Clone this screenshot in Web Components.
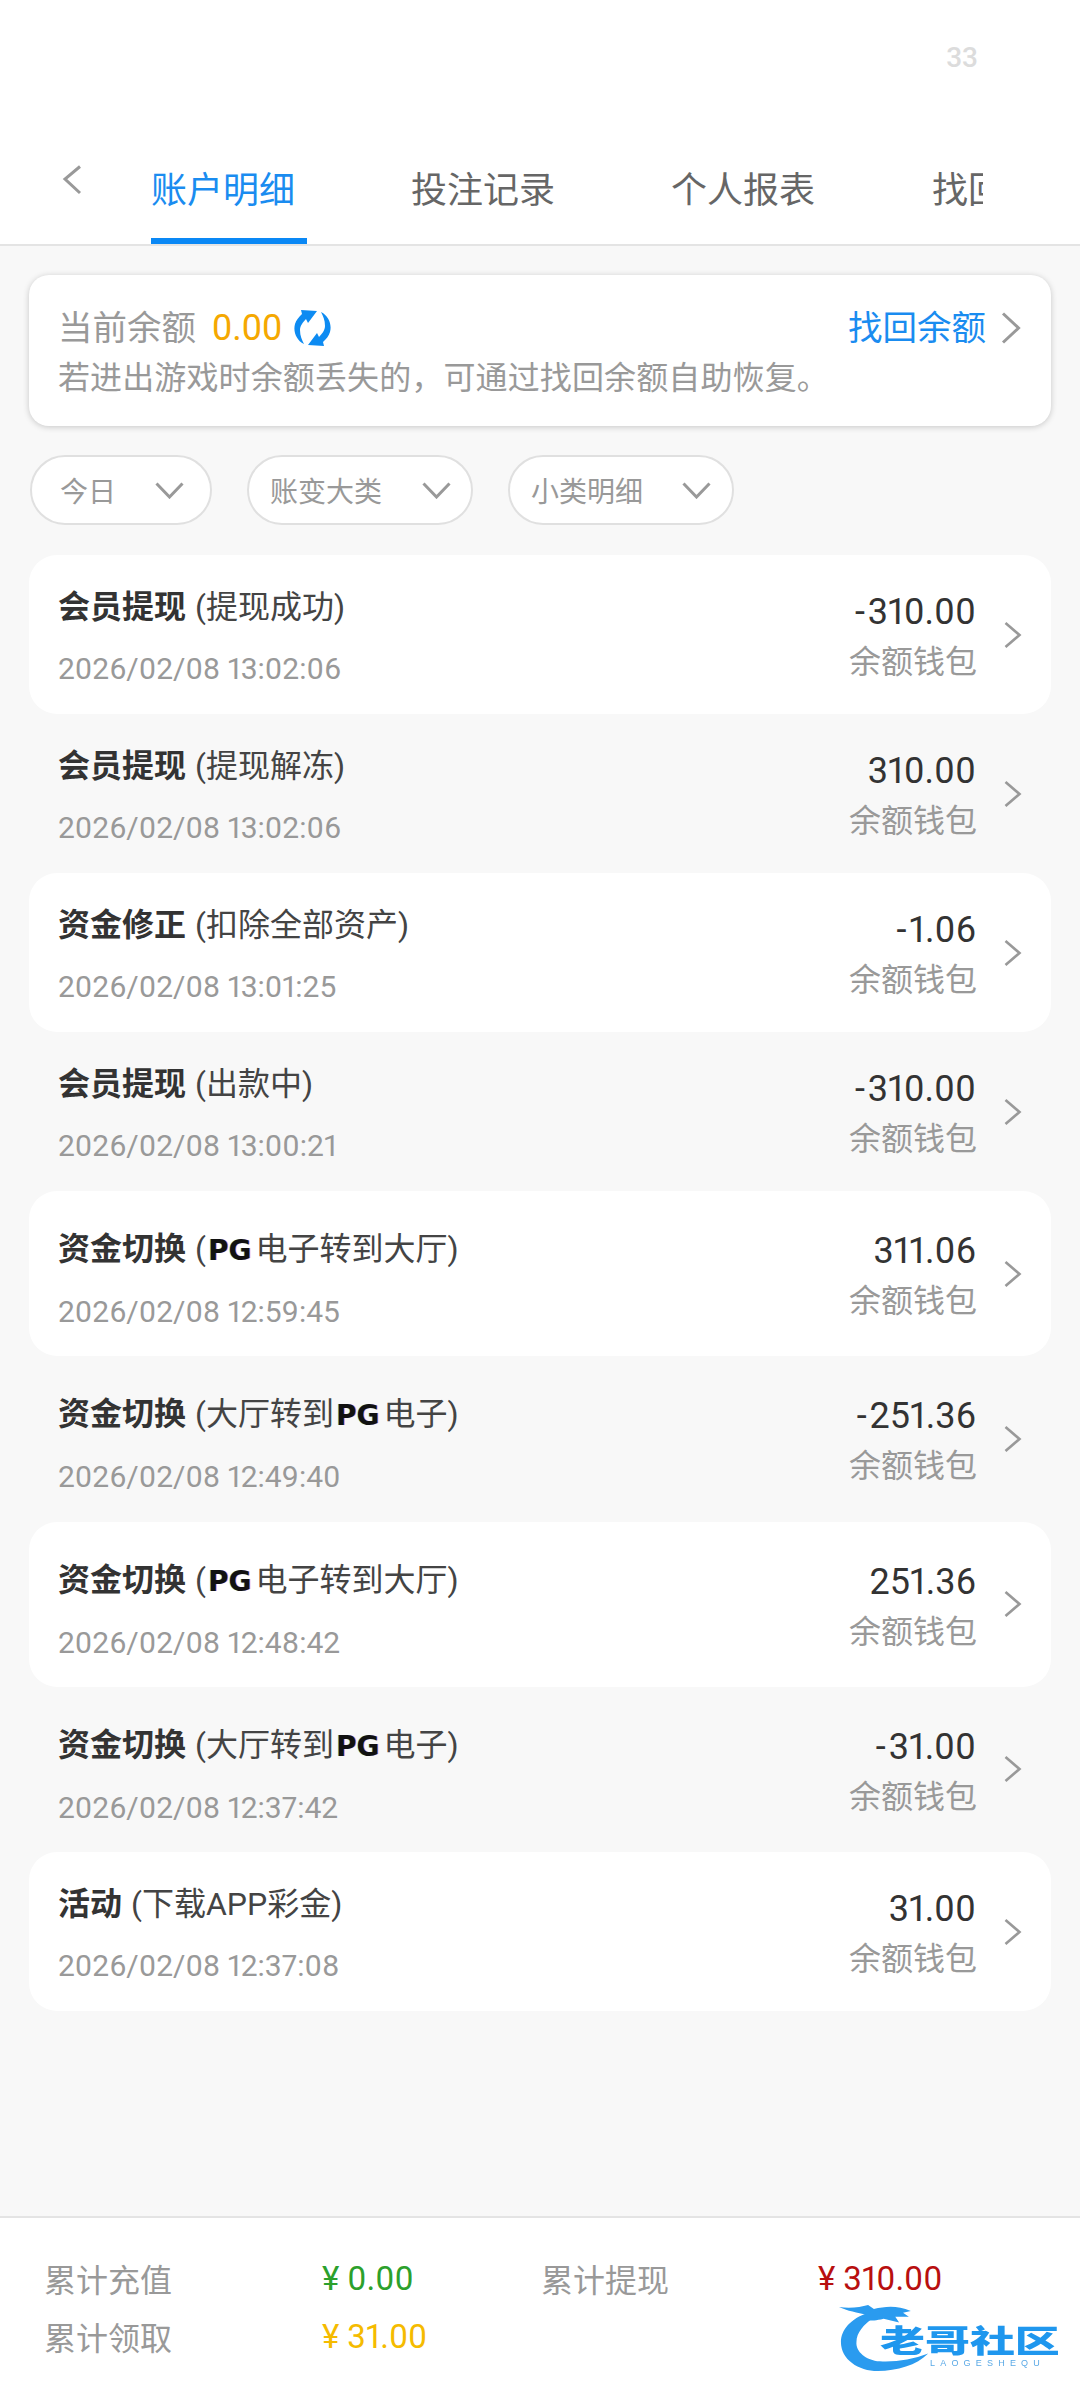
<!DOCTYPE html>
<html lang="zh">
<head>
<meta charset="utf-8">
<title>账户明细</title>
<style>
  html, body { margin: 0; padding: 0; }
  body {
    width: 1080px; height: 2400px; overflow: hidden;
    font-family: Roboto, "Noto Sans CJK SC", sans-serif;
    background: #f8f8f8;
  }
  app-page { height: 2400px; }
</style>
</head>
<body>
<app-page>
  <top-tabs></top-tabs>
  <balance-card></balance-card>
  <filter-bar>
    <filter-chip style="--w:182px;--pad:28px;--end:26px">今日</filter-chip>
    <filter-chip style="--w:226px;--pad:21px;--end:20px">账变大类</filter-chip>
    <filter-chip style="--w:226px;--pad:21px;--end:21px">小类明细</filter-chip>
  </filter-bar>
  <ledger-list>
    <ledger-row card name="会员提现" detail="(提现成功)" time="2026/02/08 13:02:06" amount="-310.00"></ledger-row>
    <ledger-row name="会员提现" detail="(提现解冻)" time="2026/02/08 13:02:06" amount="310.00"></ledger-row>
    <ledger-row card name="资金修正" detail="(扣除全部资产)" time="2026/02/08 13:01:25" amount="-1.06"></ledger-row>
    <ledger-row name="会员提现" detail="(出款中)" time="2026/02/08 13:00:21" amount="-310.00"></ledger-row>
    <ledger-row card tall name="资金切换" before="(" after="电子转到大厅)" time="2026/02/08 12:59:45" amount="311.06"></ledger-row>
    <ledger-row tall name="资金切换" before="(大厅转到" after="电子)" time="2026/02/08 12:49:40" amount="-251.36"></ledger-row>
    <ledger-row card tall name="资金切换" before="(" after="电子转到大厅)" time="2026/02/08 12:48:42" amount="251.36"></ledger-row>
    <ledger-row tall name="资金切换" before="(大厅转到" after="电子)" time="2026/02/08 12:37:42" amount="-31.00"></ledger-row>
    <ledger-row card name="活动" detail="(下载APP彩金)" time="2026/02/08 12:37:08" amount="31.00"></ledger-row>
  </ledger-list>
  <totals-bar></totals-bar>
</app-page>

<script>
const CJK = 'Roboto, "Noto Sans CJK SC", sans-serif'

class AppPage extends HTMLElement{
    constructor() {
        super()
        this.attachShadow({mode:"open"})
        this.shadowRoot.innerHTML = `
        <style>
        :host { display: flex; flex-direction: column; font-family: ${CJK}; }
        </style>
        <slot></slot>`
    }
}

class TopTabs extends HTMLElement{
    constructor() {
        super()
        this.attachShadow({mode:"open"})
        const tabs = ["账户明细","投注记录","个人报表","找回余额"]
        this.shadowRoot.innerHTML = `
        <style>
        :host { display: block; background: #fff; border-bottom: 2px solid #e4e4e4; }
        .count { height: 165px; box-sizing: border-box; padding: 44px 102px 0 0; text-align: right;
                 font-size: 28px; line-height: 28px; font-weight: 500; color: #dcdcdc; }
        .bar { display: flex; height: 79px; }
        .back { width: 151px; flex: none; box-sizing: border-box; padding-left: 62px; }
        .back svg { display: block; }
        .scroll { width: 832px; display: flex; gap: 104px; overflow: hidden; }
        .tab { flex: none; width: 156px; box-sizing: border-box; padding-top: 1px; height: 79px;
               font-size: 36px; line-height: 50px; color: #666; white-space: nowrap; }
        .tab.on { color: #1a8cf0; border-bottom: 6px solid #0a88f5; }
        .tab:last-child { margin-left: 1px; }
        </style>
        <div class="count">33</div>
        <div class="bar">
            <div class="back">
                <svg width="20" height="30" viewBox="0 0 20 30"><path d="M18 1.5 3 14l15 14" fill="none" stroke="#999" stroke-width="3"/></svg>
            </div>
            <div class="scroll">
                ${tabs.map((t, i) => `<div class="tab ${i == 0 ? "on" : ""}">${t}</div>`).join("")}
            </div>
        </div>`
    }
}

class BalanceCard extends HTMLElement{
    constructor() {
        super()
        this.attachShadow({mode:"open"})
        this.shadowRoot.innerHTML = `
        <style>
        :host { display: block; margin: 29px 29px 0 29px; height: 151px; box-sizing: border-box; padding: 31px 29px 0 29px;
                background: #fff; border-radius: 20px; box-shadow: 0 1px 6px rgba(0,0,0,.2); }
        .line1 { display: flex; align-items: center; height: 44px; }
        .label { font-size: 34.5px; line-height: 44px; color: #999; }
        .money { font-size: 36px; line-height: 44px; color: #f5a800; margin-left: 16px; }
        .spin { margin-left: 12px; display: block; }
        .back { margin-left: auto; font-size: 34.5px; line-height: 44px; color: #1a8cf0; }
        .more { margin-left: 15px; margin-right: 1px; display: block; }
        .tip { margin-top: 6px; font-size: 32px; line-height: 44px; color: #999; white-space: nowrap; letter-spacing: .12px; }
        </style>
        <div class="line1">
            <span class="label">当前余额</span>
            <span class="money">0.00</span>
            <svg class="spin" width="37" height="38" viewBox="0 0 37 38" fill="#0d8bf2">
                <path d="M10 35C2 31-1 22 1 15 2 11 5 8 8 5L7 1 23 2 14 14 12 10C9 13 6 17 6 21 6 27 8 31 10 35Z"/>
                <path transform="rotate(180 18.5 19)" d="M10 35C2 31-1 22 1 15 2 11 5 8 8 5L7 1 23 2 14 14 12 10C9 13 6 17 6 21 6 27 8 31 10 35Z"/>
            </svg>
            <span class="back">找回余额</span>
            <svg class="more" width="20" height="32" viewBox="0 0 20 32"><path d="M2 1.5 17.5 16 2 30.5" fill="none" stroke="#999" stroke-width="3"/></svg>
        </div>
        <div class="tip">若进出游戏时余额丢失的，可通过找回余额自助恢复。</div>`
    }
}

class FilterBar extends HTMLElement{
    constructor() {
        super()
        this.attachShadow({mode:"open"})
        this.shadowRoot.innerHTML = `
        <style>
        :host { display: flex; margin: 29px 0 30px 30px; gap: 35px; }
        </style>
        <slot></slot>`
    }
}

class FilterChip extends HTMLElement{
    constructor() {
        super()
        this.attachShadow({mode:"open"})
        this.shadowRoot.innerHTML = `
        <style>
        :host { display: flex; align-items: center; justify-content: space-between; box-sizing: border-box;
                width: var(--w); height: 70px; padding: 0 var(--end) 0 var(--pad);
                background: #fff; border: 2px solid #e0e0e0; border-radius: 35px;
                font-size: 28px; color: #999; }
        svg { display: block; flex: none; }
        </style>
        <slot></slot>
        <svg width="29" height="17" viewBox="0 0 29 17"><path d="M1.5 1.5 14.5 15 27.5 1.5" fill="none" stroke="#999" stroke-width="3"/></svg>`
    }
}

class LedgerList extends HTMLElement{
    constructor() {
        super()
        this.attachShadow({mode:"open"})
        this.shadowRoot.innerHTML = `
        <style>
        :host { display: flex; flex-direction: column; flex: 1; margin: 0 29px; }
        </style>
        <slot></slot>`
    }
}

class LedgerRow extends HTMLElement{
    static get observedAttributes() {
        return ["name","detail","before","after","time","amount"]
    }

    constructor() {
        super()
        this.attachShadow({mode:"open"})
    }

    connectedCallback(){
        this.render()
    }

    attributeChangedCallback() {
        this.render()
    }

    render(){
        const a = n => this.getAttribute(n) || ""
        const detail = this.hasAttribute("detail")
            ? a("detail")
            : `${a("before")}<span class="pg">PG</span>${a("after")}`
        const amount = a("amount").replace(/^-/, '<span class="minus">-</span>')
        this.shadowRoot.innerHTML = `
        <style>
        :host { display: flex; align-items: center; box-sizing: border-box; height: 159px;
                padding: 0 29px; border-radius: 28px; }
        :host([card]) { background: #fff; }
        :host([tall]) { height: 165.25px; }
        .left { flex: 1; align-self: flex-start; padding-top: 30px; }
        :host([tall]) .left { padding-top: 36px; }
        .title { font-size: 32px; line-height: 44px; color: #444; white-space: nowrap; }
        .title b { font-weight: 700; color: #333; margin-right: 1px; }
        .pg { font-family: "DejaVu Sans", sans-serif; font-weight: 700; font-size: 28px; color: #111;
              text-shadow: -1px 0 rgba(0,220,230,.35), 1px 0 rgba(240,0,120,.35); margin: 0 4px 0 2px; }
        .time { margin-top: 20px; font-size: 30px; line-height: 40px; color: #999; white-space: nowrap;
                font-variant-numeric: proportional-nums; }
        :host([tall]) .time { margin-top: 19px; }
        .right { text-align: right; padding-top: 3px; margin-right: -1px; }
        .amount { font-size: 36px; line-height: 48px; color: #333; font-variant-numeric: proportional-nums; }
        .minus { margin-right: 3px; }
        .wallet { margin: 4px -1px 0 0; font-size: 32px; line-height: 44px; color: #999; }
        svg { display: block; margin-left: 29px; flex: none; }
        </style>
        <div class="left">
            <div class="title"><b>${a("name")}</b> ${detail}</div>
            <div class="time">${a("time")}</div>
        </div>
        <div class="right">
            <div class="amount">${amount}</div>
            <div class="wallet">余额钱包</div>
        </div>
        <svg width="18" height="26" viewBox="0 0 18 26"><path d="M1.5 1 15.5 13 1.5 25" fill="none" stroke="#999" stroke-width="2.6"/></svg>`
    }
}

class TotalsBar extends HTMLElement{
    constructor() {
        super()
        this.attachShadow({mode:"open"})
        this.shadowRoot.innerHTML = `
        <style>
        :host { display: block; position: relative; height: 184px; box-sizing: border-box; padding: 31px 0 0 44px;
                background: #fff; border-top: 2px solid #e4e4e4; }
        .grid { display: grid; grid-template-columns: 278px 219px 277px 1fr; grid-auto-rows: 58px; align-items: center; }
        .k { font-size: 32px; color: #999; }
        .v { font-size: 33px; font-variant-numeric: proportional-nums; }
        .v i { font-style: normal; margin-right: 8px; }
        .green { color: #2ca02c; }
        .red { color: #b80f0f; }
        .gold { color: #f5bb00; }
        </style>
        <div class="grid">
            <span class="k">累计充值</span><span class="v green"><i>¥</i>0.00</span>
            <span class="k">累计提现</span><span class="v red"><i>¥</i>310.00</span>
            <span class="k">累计领取</span><span class="v gold"><i>¥</i>31.00</span>
        </div>
        <forum-mark></forum-mark>`
    }
}

// watermark sitting over the footer corner
class ForumMark extends HTMLElement{
    constructor() {
        super()
        this.attachShadow({mode:"open"})
        this.shadowRoot.innerHTML = `
        <style>
        :host { display: block; position: absolute; left: 839px; top: 85px; width: 225px; height: 76px; filter: blur(.6px); }
        svg { position: absolute; left: 0; top: 0; }
        .zh { position: absolute; left: 41px; top: 18px; font-family: "Noto Sans CJK SC", sans-serif;
              font-size: 31px; line-height: 36px; font-weight: 900; white-space: nowrap; color: #1f97ee;
              transform: scaleX(1.45); transform-origin: 0 50%; }
        .en { position: absolute; left: 91px; top: 55px; font-family: "Liberation Sans", sans-serif; font-size: 9px;
              line-height: 10px; letter-spacing: 5.2px; color: #5aa9e6; white-space: nowrap; }
        </style>
        <svg width="97" height="74" viewBox="0 0 100 76" fill="#2a9bef">
            <path d="M30 10C12 16 2 28 2 40 2 58 20 70 40 70 60 70 80 64 92 52 76 58 58 61 42 60 28 59 17 50 18 40 18 30 26 22 34 16Z"/>
            <path d="M0 4C12 6 22 4 30 2L36 6C48 3 60 2 74 8L66 10 72 14 58 14 62 20 46 16C38 18 34 18 30 18L28 12C20 10 8 8 0 4Z"/>
        </svg>
        <div class="zh">老哥社区</div>
        <div class="en">LAOGESHEQU</div>`
    }
}

customElements.define("app-page", AppPage)
customElements.define("top-tabs", TopTabs)
customElements.define("balance-card", BalanceCard)
customElements.define("filter-bar", FilterBar)
customElements.define("filter-chip", FilterChip)
customElements.define("ledger-list", LedgerList)
customElements.define("ledger-row", LedgerRow)
customElements.define("totals-bar", TotalsBar)
customElements.define("forum-mark", ForumMark)
</script>
</body>
</html>
